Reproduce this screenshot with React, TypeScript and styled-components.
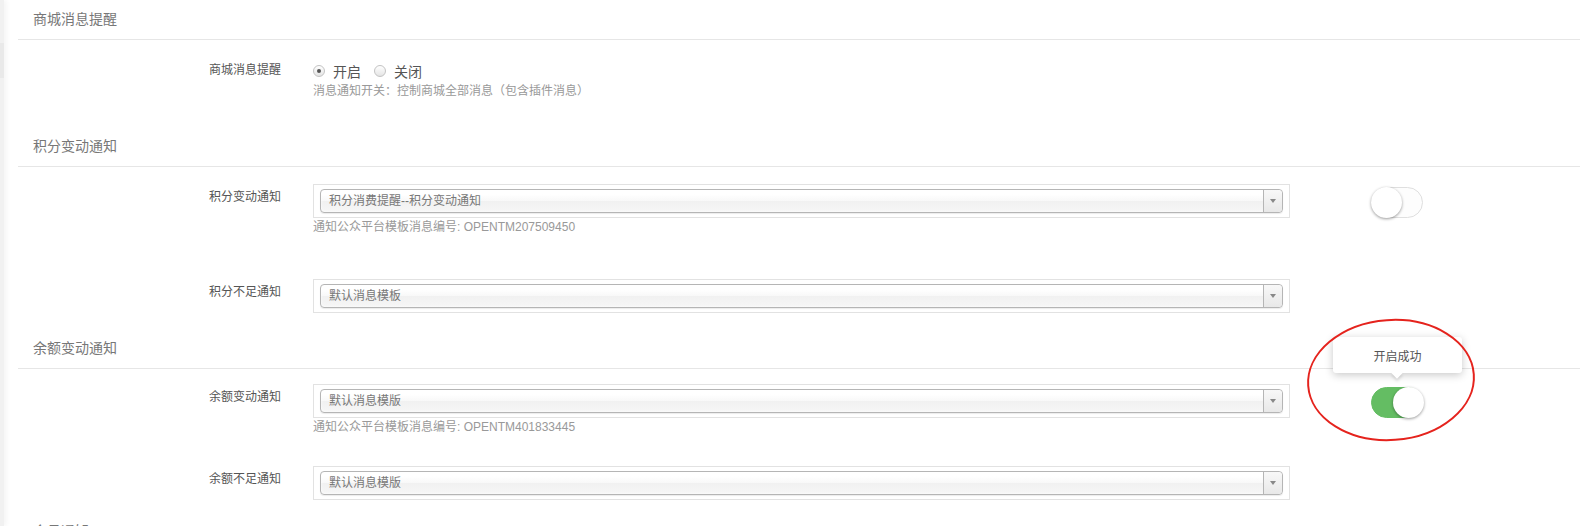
import React from "react";
import styled, { createGlobalStyle } from "styled-components";

const GlobalStyle = createGlobalStyle`
  html, body {
    margin: 0;
    padding: 0;
    background: #ffffff;
    font-family: "Liberation Sans", "Noto Sans CJK SC", sans-serif;
    overflow: hidden;
  }
  * { box-sizing: border-box; }
`;

const Page = styled.div`
  display: flex;
  width: 1580px;
  height: 526px;
  overflow: hidden;
`;

const SideEdge = styled.div`
  flex: 0 0 4px;
  background: #f1f1f1;
  box-shadow: 2px 0 5px rgba(0, 0, 0, 0.06);
  padding-top: 43px;
`;

const SideItem = styled.div`
  height: 35px;
  background: #e9e9e9;
`;

const Content = styled.div`
  flex: 1;
  margin-left: 14px;
`;

const SectionHeading = styled.div`
  height: 40px;
  line-height: 39px;
  padding-left: 15px;
  font-size: 14px;
  color: #777;
  border-bottom: 1px solid #e6e6e6;
`;

const SectionBody = styled.div<{ $top: number; $bottom: number }>`
  padding-top: ${(p) => p.$top}px;
  padding-bottom: ${(p) => p.$bottom}px;
`;

const FormGroup = styled.div<{ $mb?: number }>`
  display: grid;
  grid-template-columns: 295px 977px auto;
  align-items: start;
  margin-bottom: ${(p) => p.$mb ?? 0}px;
`;

const Label = styled.div<{ $top?: number }>`
  padding-right: 32px;
  padding-top: ${(p) => p.$top ?? 0}px;
  text-align: right;
  font-size: 12px;
  line-height: 20px;
  color: #555;
`;

const Control = styled.div`
  display: flex;
  flex-direction: column;
`;

const RadioRow = styled.div`
  display: flex;
  align-items: center;
  height: 22px;
`;

const RadioItem = styled.label`
  display: flex;
  align-items: center;
  margin-right: 13px;
  font-size: 14px;
  color: #555;
`;

const RadioCircle = styled.span<{ $checked?: boolean }>`
  position: relative;
  width: 12px;
  height: 12px;
  border-radius: 50%;
  border: 1px solid #c3c3c3;
  background: linear-gradient(#ffffff, #e4e4e4);
  margin-right: 8px;
  &::after {
    content: "";
    display: ${(p) => (p.$checked ? "block" : "none")};
    position: absolute;
    left: 3px;
    top: 3px;
    width: 4px;
    height: 4px;
    border-radius: 50%;
    background: #555;
  }
`;

const Help = styled.div`
  font-size: 12px;
  line-height: 18px;
  color: #999;
`;

const SelectFrame = styled.div`
  border: 1px solid #e2e2e2;
  padding: 4px 6px;
`;

const SelectBox = styled.div`
  position: relative;
  height: 24px;
  border: 1px solid #b5b5b5;
  border-radius: 4px;
  background: linear-gradient(#ffffff 20%, #f8f8f8 50%, #f1f1f1 52%, #f6f6f6 100%);
  box-shadow: inset 0 0 3px #fff, 0 1px 1px rgba(0, 0, 0, 0.08);
  display: flex;
  align-items: center;
  padding-left: 8px;
  font-size: 12px;
  color: #777;
`;

const SelectText = styled.span`
  flex: 1;
  line-height: 22px;
`;

const SelectArrow = styled.div`
  width: 19px;
  height: 22px;
  border-left: 1px solid #b5b5b5;
  border-radius: 0 4px 4px 0;
  background: linear-gradient(#f8f8f8, #e8e8e8);
  display: flex;
  align-items: center;
  justify-content: center;
  &::after {
    content: "";
    border-left: 3px solid transparent;
    border-right: 3px solid transparent;
    border-top: 4px solid #888;
  }
`;

const ToggleCell = styled.div`
  padding-left: 81px;
  padding-top: 3px;
`;

const ToggleWrap = styled.div`
  position: relative;
  width: 52px;
  height: 31px;
`;

const Toggle = styled.div<{ $on?: boolean }>`
  width: 52px;
  height: 31px;
  border-radius: 16px;
  border: 1px solid ${(p) => (p.$on ? "#64bd63" : "#dfdfdf")};
  background: ${(p) => (p.$on ? "#64bd63" : "#fdfdfd")};
  position: relative;
  &::after {
    content: "";
    position: absolute;
    top: -1px;
    left: ${(p) => (p.$on ? "21px" : "-1px")};
    width: 31px;
    height: 31px;
    border-radius: 50%;
    background: #fff;
    box-shadow: 0 1px 3px rgba(0, 0, 0, 0.4);
  }
`;

const Tooltip = styled.div`
  position: absolute;
  left: -38px;
  top: -50px;
  width: 129px;
  height: 36px;
  background: #fff;
  border-radius: 3px;
  box-shadow: 0 2px 8px rgba(0, 0, 0, 0.22);
  font-size: 12px;
  color: #555;
  display: flex;
  align-items: center;
  justify-content: center;
  &::after {
    content: "";
    position: absolute;
    left: 60px;
    bottom: -4px;
    width: 8px;
    height: 8px;
    background: #fff;
    transform: rotate(45deg);
    box-shadow: 2px 2px 3px rgba(0, 0, 0, 0.12);
  }
`;

const TooltipText = styled.span`
  position: relative;
  z-index: 1;
`;

const Marker = styled.svg`
  position: absolute;
  left: -65px;
  top: -69px;
  pointer-events: none;
  overflow: visible;
`;

type SelectRowProps = {
  label: string;
  value: string;
  help?: string;
  toggle?: "on" | "off";
  tooltip?: boolean;
  mb?: number;
};

function SelectRow({ label, value, help, toggle, tooltip, mb }: SelectRowProps) {
  return (
    <FormGroup $mb={mb}>
      <Label $top={3}>{label}</Label>
      <Control>
        <SelectFrame>
          <SelectBox>
            <SelectText>{value}</SelectText>
            <SelectArrow />
          </SelectBox>
        </SelectFrame>
        {help && <Help>{help}</Help>}
      </Control>
      {toggle && (
        <ToggleCell>
          <ToggleWrap>
            <Toggle $on={toggle === "on"} />
            {tooltip && (
              <>
                <Tooltip>
                  <TooltipText>开启成功</TooltipText>
                </Tooltip>
                <Marker width="170" height="124" viewBox="0 0 170 124">
                  <ellipse
                    cx="85"
                    cy="62"
                    rx="83"
                    ry="60"
                    fill="none"
                    stroke="#e5231d"
                    strokeWidth="2"
                    transform="rotate(-4 85 62)"
                  />
                </Marker>
              </>
            )}
          </ToggleWrap>
        </ToggleCell>
      )}
    </FormGroup>
  );
}

export default function App() {
  return (
    <Page>
      <GlobalStyle />
      <SideEdge>
        <SideItem />
      </SideEdge>
      <Content>
        <SectionHeading>商城消息提醒</SectionHeading>
        <SectionBody $top={20} $bottom={27}>
          <FormGroup>
            <Label>商城消息提醒</Label>
            <Control>
              <RadioRow>
                <RadioItem>
                  <RadioCircle $checked />
                  开启
                </RadioItem>
                <RadioItem>
                  <RadioCircle />
                  关闭
                </RadioItem>
              </RadioRow>
              <Help>消息通知开关：控制商城全部消息（包含插件消息）</Help>
            </Control>
          </FormGroup>
        </SectionBody>

        <SectionHeading>积分变动通知</SectionHeading>
        <SectionBody $top={17} $bottom={16}>
          <SelectRow
            label="积分变动通知"
            value="积分消费提醒--积分变动通知"
            help="通知公众平台模板消息编号: OPENTM207509450"
            toggle="off"
            mb={43}
          />
          <SelectRow label="积分不足通知" value="默认消息模板" />
        </SectionBody>

        <SectionHeading>余额变动通知</SectionHeading>
        <SectionBody $top={15} $bottom={12}>
          <SelectRow
            label="余额变动通知"
            value="默认消息模版"
            help="通知公众平台模板消息编号: OPENTM401833445"
            toggle="on"
            tooltip
            mb={30}
          />
          <SelectRow label="余额不足通知" value="默认消息模版" />
        </SectionBody>

        <SectionHeading>会员通知</SectionHeading>
      </Content>
    </Page>
  );
}
